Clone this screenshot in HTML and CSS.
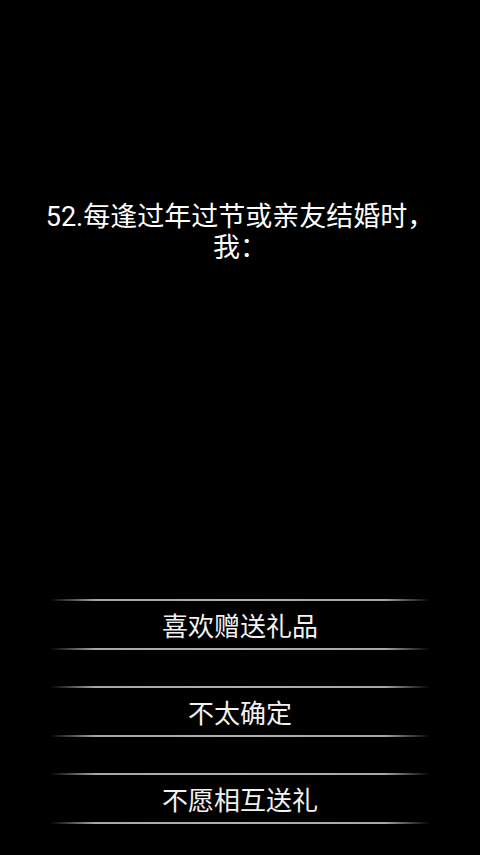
FILE: index.html
```html
<!DOCTYPE html>
<html lang="zh-CN">
<head>
<meta charset="utf-8">
<link rel="stylesheet" href="styles.css">
</head>
<body>
<div class="screen">
  <div class="question">52.每逢过年过节或亲友结婚时，<br>我：</div>
  <div class="options">
    <div class="option"><div class="line"></div><div class="label">喜欢赠送礼品</div><div class="line"></div></div>
    <div class="option"><div class="line"></div><div class="label">不太确定</div><div class="line"></div></div>
    <div class="option"><div class="line"></div><div class="label">不愿相互送礼</div><div class="line"></div></div>
  </div>
</div>
</body>
</html>
```
FILE: styles.css
```css
html, body {
  margin: 0;
  padding: 0;
  background: #000;
}
.screen {
  width: 480px;
  height: 855px;
  display: flex;
  flex-direction: column;
  font-family: Roboto, "Noto Sans CJK SC", sans-serif;
  color: #fff;
}
.question {
  padding-top: 202px;
  font-size: 27px;
  line-height: 31px;
  text-align: center;
}
.options {
  margin-top: auto;
  padding-bottom: 31px;
  display: flex;
  flex-direction: column;
  gap: 36px;
}
.option {
  display: flex;
  flex-direction: column;
}
.line {
  height: 2px;
  margin: 0 50px;
  background: linear-gradient(to right, rgba(170,170,170,0), #a8a8a8 12%, #b0b0b0 50%, #a8a8a8 88%, rgba(170,170,170,0));
}
.label {
  height: 47px;
  display: flex;
  align-items: center;
  justify-content: center;
  font-size: 26px;
  color: #f2f2f2;
}
```
